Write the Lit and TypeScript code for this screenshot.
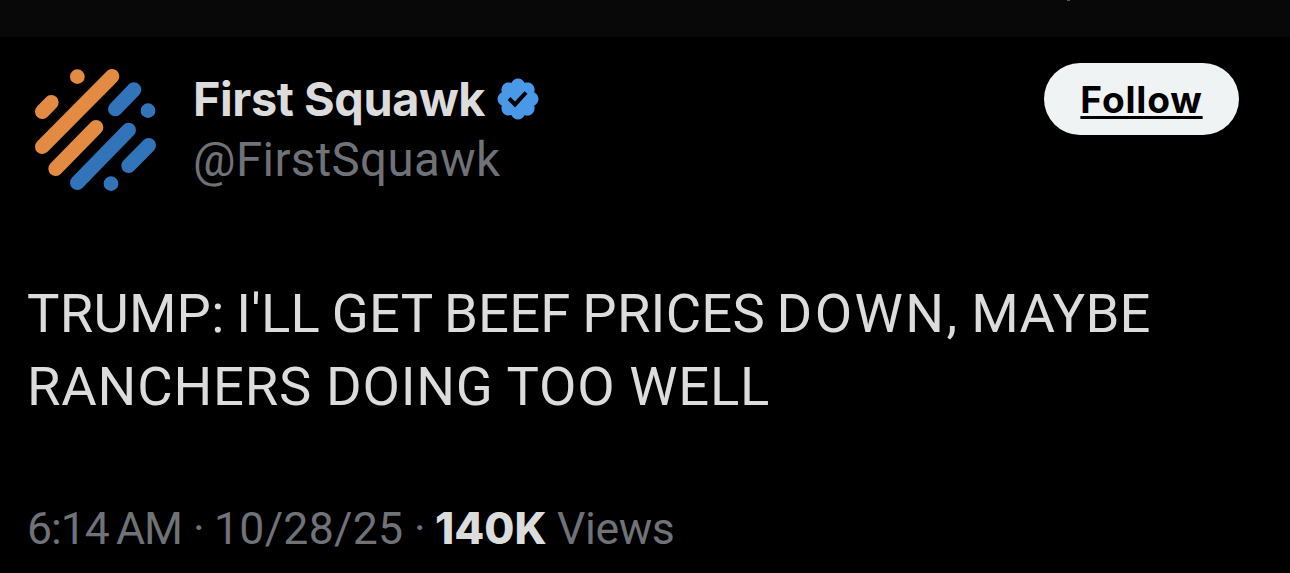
import { LitElement, html, css } from "lit";

class VerifiedBadge extends LitElement {
  static styles = css`
    :host {
      display: block;
      width: 48px;
      height: 48px;
    }

    svg {
      display: block;
      width: 100%;
      height: 100%;
      fill: #4a99e9;
    }
  `;

  render() {
    return html`
      <svg viewBox="0 0 22 22" aria-label="Verified account">
        <path d="M20.396 11c-.018-.646-.215-1.275-.57-1.816-.354-.54-.852-.972-1.438-1.246.223-.607.27-1.264.14-1.897-.131-.634-.437-1.218-.882-1.687-.47-.445-1.053-.75-1.687-.882-.633-.13-1.29-.083-1.897.14-.273-.587-.704-1.086-1.245-1.44S11.647 1.62 11 1.604c-.646.017-1.273.213-1.813.568s-.969.854-1.24 1.44c-.608-.223-1.267-.272-1.902-.14-.635.13-1.22.436-1.69.882-.445.47-.749 1.055-.878 1.688-.13.633-.08 1.29.144 1.896-.587.274-1.087.705-1.443 1.245-.356.54-.555 1.17-.574 1.817.02.647.218 1.276.574 1.817.356.54.856.972 1.443 1.245-.224.606-.274 1.263-.144 1.896.13.634.433 1.218.877 1.688.47.443 1.054.747 1.687.878.633.132 1.29.084 1.897-.136.274.586.705 1.084 1.246 1.439.54.354 1.17.551 1.816.569.647-.016 1.276-.213 1.817-.567s.972-.854 1.245-1.44c.604.239 1.266.296 1.903.164.636-.132 1.22-.447 1.68-.907.46-.46.776-1.044.908-1.681s.075-1.299-.165-1.903c.586-.274 1.084-.705 1.439-1.246.354-.54.551-1.17.569-1.816zM9.662 14.85l-3.429-3.428 1.293-1.302 2.072 2.072 4.4-4.794 1.347 1.246z" />
      </svg>
    `;
  }
}

customElements.define("verified-badge", VerifiedBadge);

class SquawkAvatar extends LitElement {
  static styles = css`
    :host {
      display: block;
      width: 150px;
      height: 150px;
    }

    svg {
      display: block;
      width: 100%;
      height: 100%;
      stroke-width: 44;
      stroke-linecap: round;
    }

    .orange {
      stroke: #e38b43;
    }

    .blue {
      stroke: #3274ba;
    }
  `;

  render() {
    return html`
      <svg viewBox="0 0 450 450" aria-label="First Squawk">
        <path class="orange" d="M172 65h.1M276 64 67 275M94 142 67 170M228 217 107 341" />
        <path class="blue" d="M342 104 286 162M384 167h.1M326 225 172 383M386 271 326 332M273 386h.1" />
      </svg>
    `;
  }
}

customElements.define("squawk-avatar", SquawkAvatar);

class AppRoot extends LitElement {
  static properties = {
    name: { type: String },
    handle: { type: String },
    views: { type: String },
  };

  static styles = css`
    :host {
      display: block;
      height: 573px;
      overflow: hidden;
      background: #000;
      color: #dcdcdc;
      font-family: Roboto, "Liberation Sans", sans-serif;
      white-space: nowrap;
    }

    * {
      box-sizing: border-box;
    }

    .topbar {
      height: 37px;
      padding-left: 1067px;
      background: #080808;
    }

    .speck {
      width: 3px;
      height: 1px;
      background: #555;
    }

    .header {
      display: flex;
      align-items: flex-start;
      height: 240px;
      padding: 18px 51px 0 20px;
    }

    .author {
      flex: 1;
      padding: 13px 0 0 23px;
    }

    .name-row {
      display: flex;
      align-items: center;
      height: 61px;
    }

    .name {
      font: 700 46.8px/60px Inter, sans-serif;
      letter-spacing: -0.42px;
    }

    verified-badge {
      margin-left: 9px;
    }

    .handle {
      padding-top: 1px;
      font-size: 47.4px;
      line-height: 60px;
      letter-spacing: 0.38px;
      color: #6f7276;
    }

    .follow {
      width: 195px;
      height: 72px;
      margin-top: 8px;
      padding: 1px 0 0;
      border: 0;
      border-radius: 36px;
      background: #eff3f4;
      color: #000;
      font: 700 37.1px/71px Inter, sans-serif;
      letter-spacing: 0.83px;
      text-decoration: underline;
      text-decoration-thickness: 3px;
      text-underline-offset: 3px;
      text-decoration-skip-ink: none;
    }

    .post {
      margin: 0;
      padding-left: 27px;
      font-size: 54.4px;
      font-weight: 400;
      line-height: 73px;
    }

    .line {
      display: block;
      letter-spacing: 0.22px;
      word-spacing: -2px;
    }

    .line + .line {
      letter-spacing: 0.8px;
      word-spacing: -0.5px;
    }

    .wide {
      letter-spacing: 2.4px;
    }

    .meta {
      display: flex;
      align-items: baseline;
      margin-top: 76px;
      padding-left: 27px;
      font-size: 44.6px;
      line-height: 60px;
      color: #6f7276;
    }

    .time {
      width: 166px;
      letter-spacing: -1.02px;
      word-spacing: -3px;
    }

    .dot {
      width: 21px;
    }

    .date {
      width: 200px;
      letter-spacing: 0.28px;
    }

    .count {
      width: 122px;
      font-family: Inter, sans-serif;
      font-size: 43.6px;
      font-weight: 800;
      color: #dcdcdc;
    }

    .label {
      letter-spacing: -0.4px;
    }
  `;

  name: string;
  handle: string;
  views: string;

  constructor() {
    super();
    this.name = "First Squawk";
    this.handle = "@FirstSquawk";
    this.views = "140K";
  }

  render() {
    return html`
      <div class="topbar"><div class="speck"></div></div>
      <div class="header">
        <squawk-avatar></squawk-avatar>
        <div class="author">
          <div class="name-row">
            <span class="name">${this.name}</span>
            <verified-badge></verified-badge>
          </div>
          <div class="handle">${this.handle}</div>
        </div>
        <button class="follow">Follow</button>
      </div>
      <p class="post">
        <span class="line">TRUMP: I'LL GET BEEF PRICES <span class="wide">DOWN,</span> MAYBE</span>
        <span class="line">RANCHERS DOING TOO WELL</span>
      </p>
      <div class="meta">
        <span class="time">6:14 AM</span>
        <span class="dot">·</span>
        <span class="date">10/28/25</span>
        <span class="dot">·</span>
        <span class="count">${this.views}</span>
        <span class="label">Views</span>
      </div>
    `;
  }
}

customElements.define("app-root", AppRoot);
